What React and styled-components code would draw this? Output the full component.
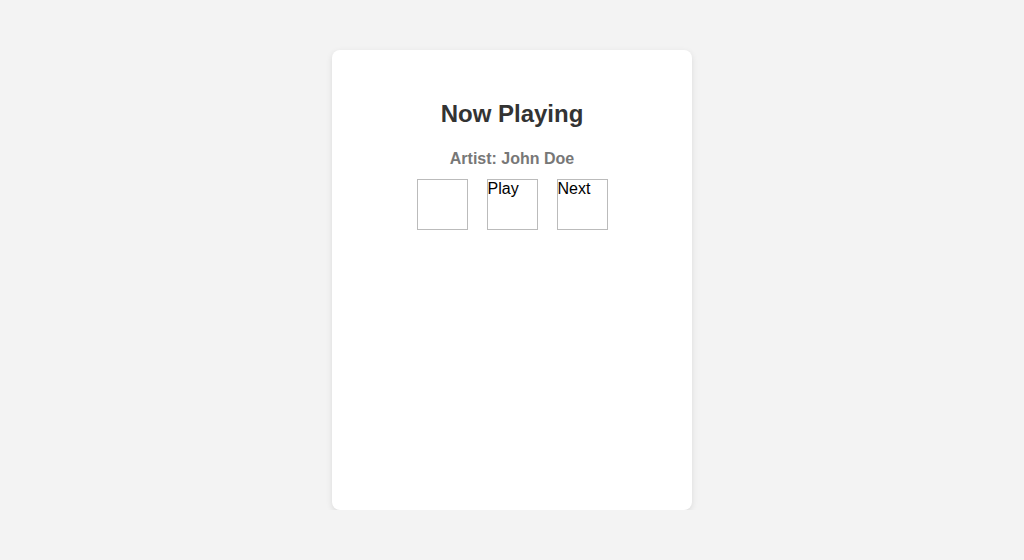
import React from "react";
import styled, { createGlobalStyle } from "styled-components";

const GlobalStyle = createGlobalStyle`
  html, body {
    margin: 0;
    padding: 0;
    background: #f3f3f3;
    font-family: "Liberation Sans", Arial, sans-serif;
  }
`;

const Page = styled.div`
  display: flex;
  justify-content: center;
  padding-top: 50px;
`;

const Card = styled.div`
  box-sizing: border-box;
  width: 360px;
  height: 460px;
  padding: 50px 20px 20px;
  background: #fff;
  border-radius: 8px;
  box-shadow: 0 2px 6px rgba(0, 0, 0, 0.1);
  text-align: center;
`;

const Title = styled.h2`
  margin: 0;
  font-size: 24px;
  line-height: 28px;
  font-weight: bold;
  color: #333;
`;

const Artist = styled.p`
  margin: 22px 0 0;
  font-size: 16px;
  line-height: 18px;
  font-weight: bold;
  color: #777;
`;

const Controls = styled.div`
  display: flex;
  justify-content: center;
  gap: 19px;
  margin-top: 11px;
`;

const ControlButton = styled.button`
  box-sizing: border-box;
  width: 51px;
  height: 51px;
  padding: 0;
  margin: 0;
  display: flex;
  align-items: flex-start;
  justify-content: flex-start;
  background: #fff;
  border: 1px solid #bbb;
  font-family: "Liberation Sans", Arial, sans-serif;
  font-size: 16px;
  line-height: 18px;
  color: #000;
  cursor: pointer;
`;

const App = () => {
  const controls = ["", "Play", "Next"];

  return (
    <>
      <GlobalStyle />
      <Page>
        <Card>
          <Title>Now Playing</Title>
          <Artist>Artist: John Doe</Artist>
          <Controls>
            {controls.map((label, i) => (
              <ControlButton key={i}>{label}</ControlButton>
            ))}
          </Controls>
        </Card>
      </Page>
    </>
  );
};

export default App;
